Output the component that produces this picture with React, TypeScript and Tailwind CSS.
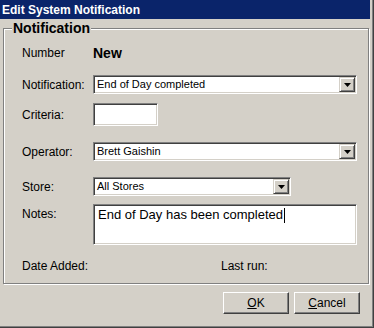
const sunken =
  "border border-t-[#808080] border-l-[#808080] border-b-white border-r-white shadow-[inset_1px_1px_0_#404040,inset_-1px_-1px_0_#d4d0c8] bg-white";

const raised =
  "border border-t-white border-l-white border-r-[#404040] border-b-[#404040] shadow-[inset_-1px_-1px_0_#808080] bg-[#d4d0c8]";

const Arrow = () => (
  <div className="flex h-full w-[16px] shrink-0 items-center justify-center border border-t-[#d4d0c8] border-l-[#d4d0c8] border-r-[#404040] border-b-[#404040] bg-[#d4d0c8] shadow-[inset_1px_1px_0_white,inset_-1px_-1px_0_#808080]">
    <svg width="7" height="4" viewBox="0 0 7 4">
      <path d="M0 0h7L3.5 4z" fill="black" />
    </svg>
  </div>
);

const Combo = ({ value, className }: { value: string; className: string }) => (
  <div className={`flex h-[19px] items-stretch p-[1px] ${sunken} ${className}`}>
    <div className="flex flex-1 items-center pl-[2px] text-[11px] text-black">
      {value}
    </div>
    <Arrow />
  </div>
);

const Label = ({ text }: { text: string }) => (
  <div className="w-[71px] shrink-0 text-[12px] leading-[16px] text-black">
    {text}
  </div>
);

const App = () => {
  return (
    <div
      className="flex h-[328px] w-[374px] flex-col bg-[#d4d0c8] pr-[2px] pb-[2px] shadow-[inset_-1px_-1px_0_#404040,inset_-2px_-2px_0_#808080]"
      style={{ fontFamily: '"Liberation Sans", Arial, sans-serif' }}
    >
      <div className="mr-[2px] flex h-[19px] items-center bg-[#0a246a] pl-[2px] text-[12px] font-bold text-white">
        Edit System Notification
      </div>

      <fieldset className="mt-[1px] mr-[3px] ml-[3px] border border-[#808080] shadow-[inset_1px_1px_0_white,1px_1px_0_white]">
        <legend className="ml-[8px] bg-[#d4d0c8] px-[1px] text-[14px] leading-[16px] font-bold text-black">
          Notification
        </legend>

        <div className="flex flex-col pt-[7px] pb-[9px] pl-[18px]">
          <div className="flex h-[20px] items-center">
            <Label text="Number" />
            <span className="text-[14px] font-bold text-black">New</span>
          </div>

          <div className="mt-[12px] flex items-center">
            <Label text="Notification:" />
            <Combo value="End of Day completed" className="w-[264px]" />
          </div>

          <div className="mt-[9px] flex items-center">
            <Label text="Criteria:" />
            <div className={`h-[23px] w-[65px] ${sunken}`} />
          </div>

          <div className="mt-[16px] flex items-center">
            <Label text="Operator:" />
            <Combo value="Brett Gaishin" className="w-[264px]" />
          </div>

          <div className="mt-[16px] flex items-center">
            <Label text="Store:" />
            <Combo value="All Stores" className="w-[198px]" />
          </div>

          <div className="mt-[8px] flex items-start">
            <div className="pt-[2px]">
              <Label text="Notes:" />
            </div>
            <div
              className={`h-[41px] w-[264px] pt-[2px] pl-[4px] text-[13px] leading-[16px] text-black ${sunken}`}
            >
              End of Day has been completed
              <span className="ml-[1px] inline-block h-[15px] w-[1px] bg-black align-middle" />
            </div>
          </div>

          <div className="mt-[13px] flex h-[16px] items-center text-[12px] text-black">
            <span className="w-[199px]">Date Added:</span>
            <span>Last run:</span>
          </div>
        </div>
      </fieldset>

      <div className="mt-[8px] flex justify-end gap-[5px] pr-[12px]">
        <button
          className={`flex h-[22px] w-[66px] items-center justify-center text-[12px] text-black ${raised}`}
        >
          <span className="underline">O</span>K
        </button>
        <button
          className={`flex h-[22px] w-[66px] items-center justify-center text-[12px] text-black ${raised}`}
        >
          <span className="underline">C</span>ancel
        </button>
      </div>
    </div>
  );
};

export default App;
